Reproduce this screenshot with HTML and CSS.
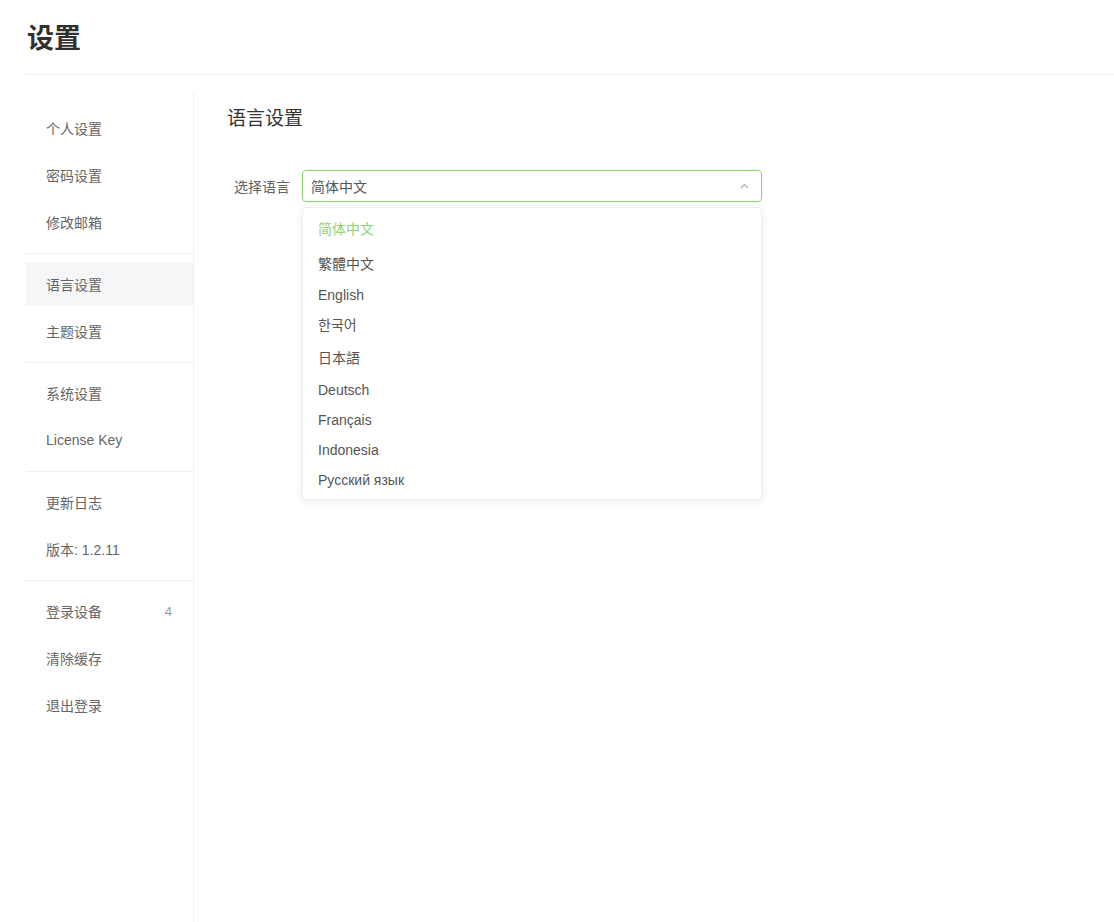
FILE: index.html
```
<!DOCTYPE html>
<html lang="zh-CN">
<head>
<meta charset="utf-8">
<title>设置</title>
<link rel="stylesheet" href="styles.css">
</head>
<body>
<div class="page">
  <header class="header">
    <h1 class="title">设置</h1>
  </header>
  <div class="main">
    <nav class="sidebar">
      <div class="group">
        <div class="item">个人设置</div>
        <div class="item">密码设置</div>
        <div class="item">修改邮箱</div>
      </div>
      <div class="group">
        <div class="item active">语言设置</div>
        <div class="item">主题设置</div>
      </div>
      <div class="group">
        <div class="item">系统设置</div>
        <div class="item">License Key</div>
      </div>
      <div class="group">
        <div class="item">更新日志</div>
        <div class="item">版本: 1.2.11</div>
      </div>
      <div class="group last">
        <div class="item"><span>登录设备</span><span class="count">4</span></div>
        <div class="item">清除缓存</div>
        <div class="item">退出登录</div>
      </div>
    </nav>
    <section class="content">
      <h2 class="heading">语言设置</h2>
      <div class="form-row">
        <label class="label">选择语言</label>
        <div class="select">
          <div class="select-box">
            <span class="select-value">简体中文</span>
            <svg class="caret" width="9" height="6" viewBox="0 0 9 6"><path d="M1 5 L4.5 1.5 L8 5" fill="none" stroke="#a8abb2" stroke-width="1.2"/></svg>
          </div>
          <ul class="dropdown">
            <li class="opt h34 selected">简体中文</li>
            <li class="opt h35">繁體中文</li>
            <li class="opt h29">English</li>
            <li class="opt h30 kor">한국어</li>
            <li class="opt h36 jp">日本語</li>
            <li class="opt h30">Deutsch</li>
            <li class="opt h30">Français</li>
            <li class="opt h30">Indonesia</li>
            <li class="opt h30">Русский язык</li>
          </ul>
        </div>
      </div>
    </section>
  </div>
</div>
</body>
</html>
```
FILE: styles.css
```
* { box-sizing: border-box; }
html, body { margin: 0; padding: 0; background: #fff; }
body {
  font-family: "Liberation Sans", "Noto Sans CJK SC", sans-serif;
  color: #666;
  font-size: 14px;
}
.page { padding-left: 26px; min-height: 100vh; }
.header {
  height: 75px;
  border-bottom: 1px solid #f0f0f0;
  padding-top: 23px;
  padding-left: 1px;
}
.title {
  margin: 0;
  font-size: 27px;
  line-height: 32px;
  font-weight: bold;
  color: #303030;
}
.main {
  display: flex;
  margin-top: 16px;
  min-height: calc(100vh - 91px);
}
.sidebar {
  width: 168px;
  flex: none;
  border-right: 1px solid #f0f0f0;
  padding-top: 6px;
}
.group {
  padding: 9px 0 10px;
  border-bottom: 1px solid #f0f0f0;
  display: flex;
  flex-direction: column;
  gap: 5px;
}
.group:first-child { padding-top: 10px; }
.group.last { border-bottom: none; }
.item {
  height: 42px;
  display: flex;
  align-items: center;
  justify-content: space-between;
  padding: 0 21px 0 20px;
  color: #666;
  font-size: 14px;
}
.item.active { background: #f5f6f7; }
.count { color: #999; font-size: 13px; }
.content {
  flex: 1;
  padding: 14px 0 0 33px;
}
.heading {
  margin: 0;
  font-size: 19px;
  line-height: 28px;
  font-weight: 400;
  color: #333;
}
.form-row {
  display: flex;
  align-items: center;
  margin-top: 37px;
}
.label {
  width: 75px;
  padding-right: 12px;
  text-align: right;
  color: #606266;
  font-size: 14px;
}
.select { position: relative; width: 460px; }
.select-box {
  height: 32px;
  border: 1px solid #95d475;
  border-radius: 4px;
  box-shadow: 0 0 0 1px rgba(149, 212, 117, 0.15);
  display: flex;
  align-items: center;
  justify-content: space-between;
  padding: 0 12px 0 8px;
}
.select-value { color: #555; font-size: 14px; }
.caret { display: block; }
.dropdown {
  position: absolute;
  top: 37px;
  left: 0;
  width: 460px;
  margin: 0;
  padding: 3px 0 4px;
  list-style: none;
  background: #fff;
  border: 1px solid #eceef2;
  border-radius: 4px;
  box-shadow: 0 2px 10px rgba(0, 0, 0, 0.08);
}
.opt {
  display: flex;
  align-items: center;
  padding-left: 15px;
  color: #555;
  font-size: 14px;
}
.h29 { height: 29px; }
.h30 { height: 30px; }
.h34 { height: 34px; }
.h35 { height: 35px; }
.h36 { height: 36px; }
.opt.jp { font-family: "Liberation Sans", "Noto Sans CJK JP", sans-serif; }
.opt.kor { font-family: "Liberation Sans", "Noto Sans CJK KR", sans-serif; }
.opt.selected { color: #8fd37a; }
```
